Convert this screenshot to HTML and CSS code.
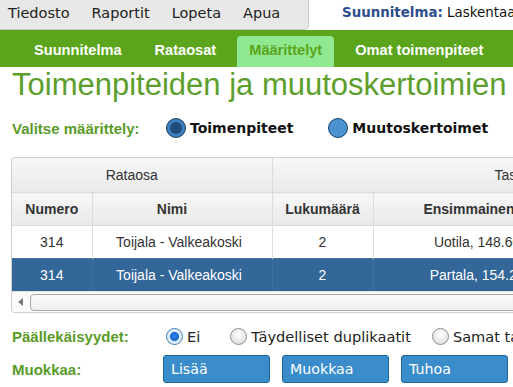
FILE: index.html
```html
<!DOCTYPE html>
<html lang="fi">
<head>
  <meta charset="UTF-8" />
  <title>Määrittelyt</title>
  <link rel="stylesheet" href="styles.css">
</head>
<body>

<header class="topbar">
  <nav class="menu">
    <span>Tiedosto</span>
    <span>Raportit</span>
    <span>Lopeta</span>
    <span>Apua</span>
  </nav>
  <div class="plan"><b>Suunnitelma:</b> Laskentaalue 2016</div>
</header>

<nav class="tabs">
  <span class="tab">Suunnitelma</span>
  <span class="tab">Rataosat</span>
  <span class="tab active">Määrittelyt</span>
  <span class="tab">Omat toimenpiteet</span>
</nav>

<h1 class="title">Toimenpiteiden ja muutoskertoimien määrittely</h1>

<div class="row choose">
  <span class="label">Valitse määrittely:</span>
  <span class="big-radio checked"></span><span class="big-text">Toimenpiteet</span>
  <span class="big-radio"></span><span class="big-text">Muutoskertoimet</span>
</div>

<div class="grid">
  <table>
    <colgroup>
      <col class="c-num"><col class="c-name"><col class="c-count"><col class="c-km"><col class="c-km">
    </colgroup>
    <thead>
      <tr class="group">
        <th colspan="2" class="g-rata">Rataosa</th>
        <th colspan="3">Tasoristeykset</th>
      </tr>
      <tr class="cols">
        <th>Numero</th>
        <th class="h-name">Nimi</th>
        <th>Lukumäärä</th>
        <th>Ensimmainen km</th>
        <th>Viimeinen km</th>
      </tr>
    </thead>
    <tbody>
      <tr>
        <td>314</td><td class="d-name">Toijala - Valkeakoski</td><td>2</td><td>Uotila, 148.600</td><td>Partala, 154.200</td>
      </tr>
      <tr class="selected">
        <td>314</td><td class="d-name">Toijala - Valkeakoski</td><td>2</td><td>Partala, 154.200</td><td>Uotila, 148.600</td>
      </tr>
    </tbody>
  </table>
  <div class="hscroll">
    <span class="arrow"></span>
    <span class="thumb"></span>
  </div>
</div>

<div class="row overlap">
  <span class="label">Päällekäisyydet:</span>
  <span class="opt first"><span class="radio checked"></span>Ei</span>
  <span class="opt"><span class="radio"></span>Täydelliset duplikaatit</span>
  <span class="opt"><span class="radio"></span>Samat tasoristeykset</span>
</div>

<div class="row edit">
  <span class="label">Muokkaa:</span>
  <button class="btn">Lisää</button>
  <button class="btn">Muokkaa</button>
  <button class="btn">Tuhoa</button>
</div>

</body>
</html>
```

FILE: styles.css
```css
html, body {
  overflow: hidden;
}
body {
  margin: 0;
  font-family: "Liberation Sans", Arial, sans-serif;
  color: #333;
  white-space: nowrap;
}
.topbar {
  display: flex;
  height: 30px;
}
.topbar > *, .tabs > *, .row > * {
  flex-shrink: 0;
}
.menu {
  display: flex;
  gap: 22px;
  width: 300px;
  height: 29px;
  padding-left: 8px;
  background: #e8e8e8;
  border-right: 1px solid #c9c9c9;
  border-bottom: 1px solid #c9c9c9;
  border-bottom-right-radius: 5px;
  font-family: "DejaVu Sans", Verdana, sans-serif;
  font-size: 14.5px;
  line-height: 26px;
  color: #222;
}
.plan {
  padding-left: 33px;
  font-family: "DejaVu Sans", Verdana, sans-serif;
  font-size: 13.4px;
  line-height: 26px;
  color: #111;
}
.plan b {
  color: #2c4d8b;
}
.tabs {
  display: flex;
  align-items: flex-end;
  gap: 9px;
  height: 37px;
  padding-left: 22px;
  background: #5aa51c;
}
.tab {
  height: 31px;
  padding: 0 12px;
  line-height: 28px;
  font-size: 14.6px;
  font-weight: bold;
  color: #fff;
  border-radius: 4px 4px 0 0;
}
.tab.active {
  background: #90e890;
  color: #5aa51c;
}
.title {
  margin: 0;
  padding-left: 12px;
  font-size: 31px;
  line-height: 36px;
  font-weight: normal;
  color: #5c9e2c;
}
.row {
  display: flex;
  align-items: center;
  padding-left: 12px;
}
.label {
  width: 151px;
  font-size: 15px;
  font-weight: bold;
  color: #5a9b2a;
}
.choose {
  height: 24px;
  margin-top: 13px;
}
.choose .label {
  width: 154px;
}
.big-radio {
  position: relative;
  width: 18px;
  height: 18px;
  border: 1px solid #203f5e;
  border-radius: 50%;
  background: #4a92d0;
}
.big-radio.checked {
  background: #3b80bd;
}
.big-radio.checked::after {
  content: "";
  position: absolute;
  left: 3px;
  top: 3px;
  width: 12px;
  height: 12px;
  border-radius: 50%;
  background: #1b4c7a;
}
.big-text {
  margin: 0 35px 0 4px;
  font-family: "DejaVu Sans", Verdana, sans-serif;
  font-size: 14px;
  font-weight: bold;
  color: #111;
}
.grid {
  width: 760px;
  margin: 17px 0 0 11px;
  border: 1px solid #cfcfcf;
  border-right: none;
  border-radius: 4px 0 0 4px;
  overflow: hidden;
}
table {
  border-collapse: collapse;
  table-layout: fixed;
  width: 759px;
  font-size: 14px;
}
.c-num { width: 80px; }
.c-name { width: 180px; }
.c-count { width: 101px; }
.c-km { width: 216px; }
th, td {
  padding: 0;
  text-align: center;
  border-left: 1px solid #dcdcdc;
  border-top: 1px solid #dcdcdc;
}
th:first-child, td:first-child {
  border-left: none;
}
thead tr:first-child th {
  border-top: none;
}
th {
  background: linear-gradient(#f7f7f7, #e9e9e9);
  color: #333;
}
.group th {
  height: 34px;
  font-weight: normal;
}
.cols th {
  height: 32px;
}
.g-rata, .h-name {
  padding-right: 20px;
}
.d-name {
  padding-right: 6px;
}
td {
  height: 32px;
  color: #333;
}
.selected td {
  background: #336699;
  color: #fff;
  border-color: #3f71a2;
}
.hscroll {
  display: flex;
  align-items: center;
  height: 20px;
  border-top: 1px solid #e2e2e2;
  background: #fbfbfb;
}
.arrow {
  width: 0;
  height: 0;
  margin-left: 6px;
  border-top: 4px solid transparent;
  border-bottom: 4px solid transparent;
  border-right: 5px solid #777;
}
.thumb {
  flex: 1;
  height: 15px;
  margin-left: 7px;
  border: 1px solid #a9a9a9;
  border-radius: 4px;
  background: linear-gradient(#fafafa, #eeeeee);
}
.overlap {
  height: 20px;
  margin-top: 13px;
}
.overlap .label {
  width: 154px;
}
.opt {
  display: flex;
  align-items: center;
  margin-right: 21px;
  font-family: "DejaVu Sans", Verdana, sans-serif;
  font-size: 14.6px;
  color: #222;
}
.opt.first {
  margin-right: 30px;
}
.radio {
  width: 15px;
  height: 15px;
  margin-right: 4px;
  border: 1px solid #8d8d8d;
  border-radius: 50%;
  background: radial-gradient(circle at 50% 35%, #ffffff, #d6d6d6);
}
.radio.checked {
  border-color: #3b7cb0;
  background: radial-gradient(circle at 50% 50%, #2f86ea 0, #1565cf 4px, #d8eaf8 5px, #eef6fc 100%);
}
.edit {
  margin-top: 9px;
  gap: 12px;
}
.edit .label {
  width: 139px;
}
.btn {
  width: 107px;
  height: 28px;
  padding: 0 0 0 7px;
  text-align: left;
  background: #3a8dca;
  border: 1px solid #20659a;
  border-radius: 3px;
  color: #fff;
  font-family: "DejaVu Sans", Verdana, sans-serif;
  font-size: 14.2px;
}
```
